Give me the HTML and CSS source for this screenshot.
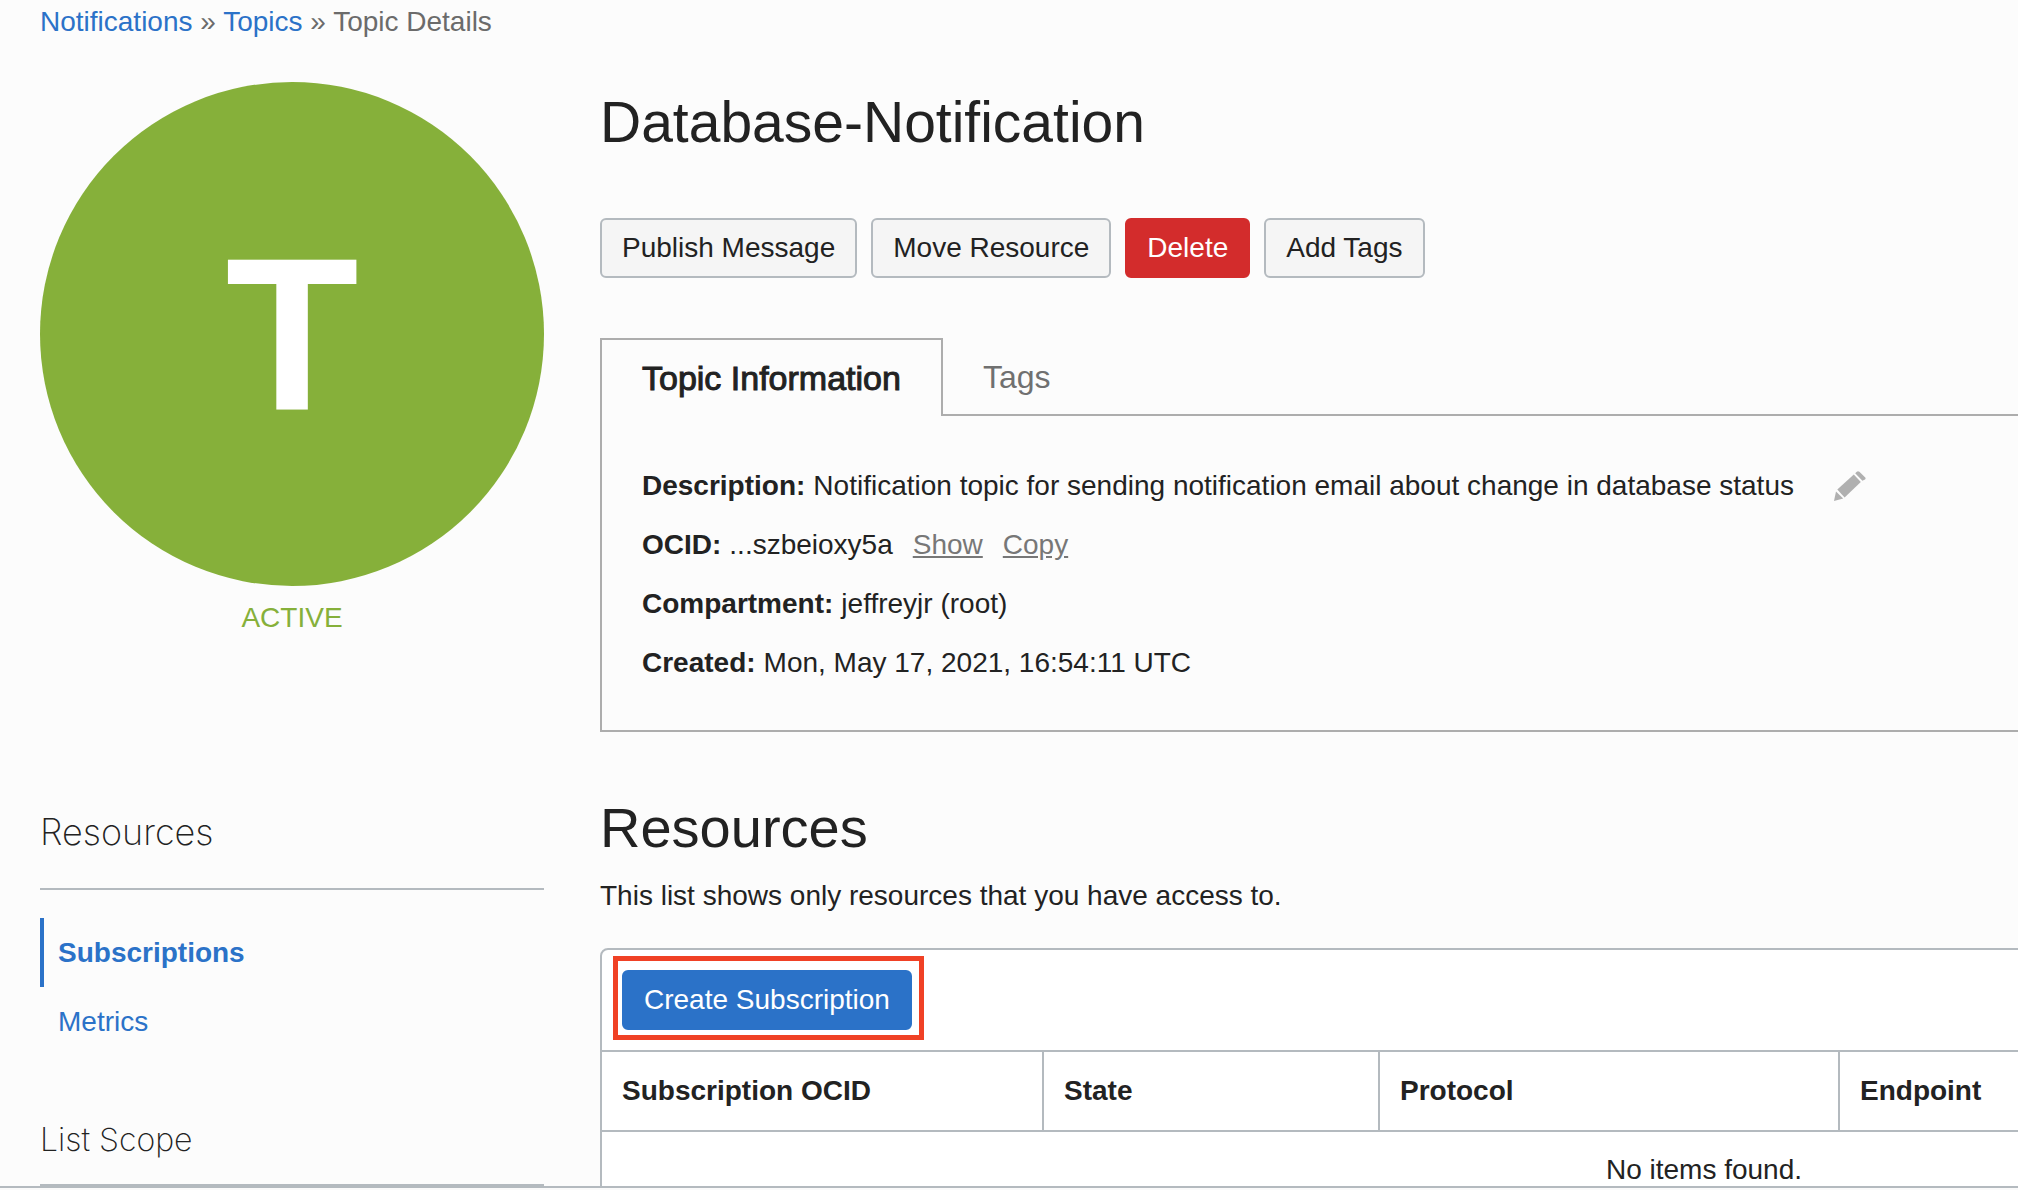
FILE: index.html
```html
<!DOCTYPE html>
<html lang="en">
<head>
<meta charset="utf-8">
<title>Topic Details</title>
<link rel="stylesheet" href="styles.css">
</head>
<body>
<div class="page">
  <nav class="breadcrumb" aria-label="Breadcrumb">
    <a href="#">Notifications</a> » <a href="#">Topics</a> » <span>Topic Details</span>
  </nav>
  <div class="columns">
    <aside class="sidebar">
      <div class="badge">T</div>
      <div class="status">ACTIVE</div>
      <h2 class="side-title">Resources</h2>
      <ul class="side-nav">
        <li><a class="side-link side-link-active" href="#">Subscriptions</a></li>
        <li><a class="side-link" href="#">Metrics</a></li>
      </ul>
      <h3 class="side-title side-title-small">List Scope</h3>
    </aside>
    <main class="main">
      <h1 class="title">Database-Notification</h1>
      <div class="actions">
        <button class="btn" type="button">Publish Message</button>
        <button class="btn" type="button">Move Resource</button>
        <button class="btn btn-danger" type="button">Delete</button>
        <button class="btn" type="button">Add Tags</button>
      </div>
      <div class="tabs" role="tablist">
        <button class="tab tab-active" type="button" role="tab" aria-selected="true">Topic Information</button>
        <button class="tab" type="button" role="tab" aria-selected="false">Tags</button>
      </div>
      <dl class="info">
        <div class="info-row">
          <dt>Description:</dt>
          <dd>Notification topic for sending notification email about change in database status</dd>
          <dd class="info-edit">
            <button class="edit" type="button" aria-label="Edit description">
              <svg width="32" height="30" viewBox="0 0 32 30" fill="#b0b0b0" aria-hidden="true">
                <path d="M2 20.500 L9.200 27.500 L0 30 Z"/>
                <path d="M3.300 18.600 L19.800 3.500 L26.800 11 L10.600 26.500 Z"/>
                <path d="M21.200 2.200 L22.800 .7 Q24 -.4 25.400 .8 L31 6.300 Q32.200 7.400 31 8.500 L28.400 9.800 Z"/>
              </svg>
            </button>
          </dd>
        </div>
        <div class="info-row">
          <dt>OCID:</dt>
          <dd>...szbeioxy5a</dd>
          <dd class="info-links"><a href="#">Show</a><a href="#">Copy</a></dd>
        </div>
        <div class="info-row"><dt>Compartment:</dt><dd>jeffreyjr (root)</dd></div>
        <div class="info-row"><dt>Created:</dt><dd>Mon, May 17, 2021, 16:54:11 UTC</dd></div>
      </dl>
      <h2 class="title section-title">Resources</h2>
      <p class="note">This list shows only resources that you have access to.</p>
      <section class="panel">
        <div class="toolbar">
          <div class="highlight">
            <button class="btn btn-primary" type="button">Create Subscription</button>
          </div>
        </div>
        <table class="grid">
          <thead>
            <tr><th class="col-ocid">Subscription OCID</th><th class="col-state">State</th><th class="col-protocol">Protocol</th><th>Endpoint</th></tr>
          </thead>
          <tbody>
            <tr><td colspan="4">No items found.</td></tr>
          </tbody>
        </table>
      </section>
    </main>
  </div>
</div>
<footer class="footer"></footer>
</body>
</html>
```
FILE: styles.css
```css
* {
  box-sizing: border-box;
}

body {
  display: flex;
  flex-direction: column;
  height: 100vh;
  margin: 0;
  background: #fcfcfc;
  color: #222;
  font: 28px/36px "Helvetica Neue", "Liberation Sans", Arial, sans-serif;
}

h1, h2, h3, p, ul, dl, dd {
  margin: 0;
  padding: 0;
  font-weight: 400;
}

a {
  color: #2b72c8;
  text-decoration: none;
}

button {
  font: inherit;
  cursor: pointer;
}

.page {
  flex: 1;
  min-height: 0;
  overflow: hidden;
  padding: 4px 0 0 40px;
}

.footer {
  flex: none;
  height: 4px;
  border-top: 2px solid #b4babf;
  background: #fafafa;
}

.breadcrumb {
  color: #6b6b6b;
}

.columns {
  display: grid;
  grid-template-columns: 504px minmax(2208px, 1fr);
  gap: 56px;
  margin-top: 42px;
}

/* Sidebar */
.badge {
  display: flex;
  align-items: center;
  justify-content: center;
  aspect-ratio: 1;
  border-radius: 50%;
  background: #86b03a;
  color: #fff;
  font-size: 218px;
  font-weight: 700;
}

.status {
  margin-top: 14px;
  color: #86b03a;
  text-align: center;
}

.side-title {
  margin-top: 172px;
  padding-bottom: 32px;
  border-bottom: 2px solid #b4babf;
  font: 200 36px/48px Inter, "Helvetica Neue", sans-serif;
}

.side-title-small {
  margin-top: 64px;
  padding-bottom: 24px;
  border-bottom-width: 4px;
  font-size: 32px;
  line-height: 40px;
}

.side-nav {
  margin-top: 28px;
  list-style: none;
}

.side-link {
  display: block;
  padding-left: 14px;
  border-left: 4px solid transparent;
  line-height: 69px;
}

.side-link-active {
  border-color: #2b72c8;
  font-weight: 700;
}

/* Heading and actions */
.title {
  padding-top: 8px;
  font-size: 57px;
  line-height: 64px;
}

.actions {
  display: flex;
  gap: 14px;
  margin-top: 64px;
}

.btn {
  height: 60px;
  padding: 0 20px;
  border: 2px solid #b4babf;
  border-radius: 6px;
  background: #f5f5f5;
  color: #222;
}

.btn-danger {
  border-color: #d32c2c;
  background: #d32c2c;
  color: #fff;
}

.btn-primary {
  border-color: #2b72c8;
  background: #2b72c8;
  color: #fff;
}

/* Tabs */
.tabs {
  display: flex;
  margin: 60px 0 -2px;
}

.tab {
  height: 78px;
  padding: 0 40px;
  border: 0;
  background: none;
  color: #707070;
  font-size: 32px;
}

.tab-active {
  position: relative;
  border: 2px solid #adadad;
  border-bottom: 0;
  background: #fcfcfc;
  color: #222;
  font-size: 34px;
  -webkit-text-stroke: 1px #222;
}

.info {
  padding: 40px 40px 38px;
  border: 2px solid #adadad;
}

.info-row {
  display: flex;
  gap: 8px;
  line-height: 59px;
}

.info-row dt {
  font-weight: 700;
}

.info-edit {
  display: flex;
  align-items: center;
  padding-left: 32px;
}

.edit {
  display: flex;
  padding: 0;
  border: 0;
  background: none;
}

.info-links {
  display: flex;
  gap: 20px;
  padding-left: 12px;
}

.info-links a {
  color: #777;
  text-decoration: underline;
}

/* Resources list */
.section-title {
  margin-top: 56px;
  font-size: 56px;
}

.note {
  margin-top: 18px;
}

.panel {
  margin-top: 34px;
  border: 2px solid #b4babf;
  border-radius: 8px;
  background: #fff;
}

.toolbar {
  display: flex;
  padding: 6px 11px 10px;
}

.highlight {
  display: flex;
  padding: 9px 7px 5px 4px;
  border: 5px solid #f04125;
}

.grid {
  width: 100%;
  border-collapse: separate;
  border-spacing: 0;
  table-layout: fixed;
}

.grid th {
  height: 82px;
  padding: 0 20px;
  border: solid #b4babf;
  border-width: 2px 2px 2px 0;
  text-align: left;
}

.grid th:last-child {
  border-right: 0;
}

.grid td {
  padding: 20px;
  text-align: center;
}

.col-ocid {
  width: 442px;
}

.col-state {
  width: 336px;
}

.col-protocol {
  width: 460px;
}
```
